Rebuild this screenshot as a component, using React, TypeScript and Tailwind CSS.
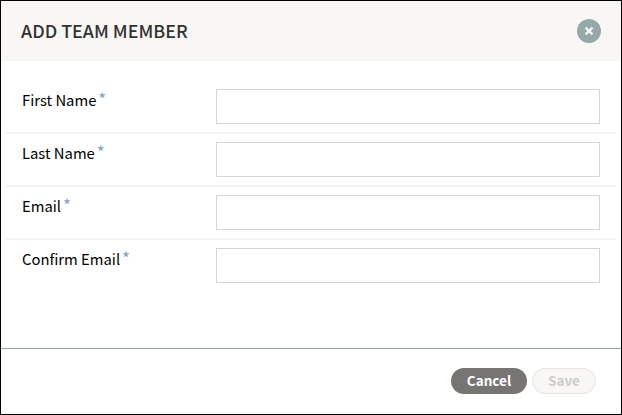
const fields = [
  { id: "firstName", label: "First Name", type: "text" },
  { id: "lastName", label: "Last Name", type: "text" },
  { id: "email", label: "Email", type: "email" },
  { id: "confirmEmail", label: "Confirm Email", type: "email" },
]

function CloseButton() {
  return (
    <button
      type="button"
      aria-label="Close"
      className="flex size-6 items-center justify-center rounded-full bg-[#95a9a8] text-[#f8f7f5]"
    >
      <svg width="10" height="10" viewBox="0 0 10 10" stroke="currentColor" strokeWidth="2.2">
        <path d="M1.6 1.6L8.4 8.4M8.4 1.6L1.6 8.4" />
      </svg>
    </button>
  )
}

export default function App() {
  return (
    <div className="flex h-[415px] w-[622px] flex-col border border-black bg-white font-['Noto_Sans_CJK_SC','Open_Sans',sans-serif]">
      <div className="flex h-[60px] items-center justify-between bg-[#f8f7f5] pr-5 pl-5">
        <h2 className="pb-0.5 text-[17.9px] leading-6 font-medium text-[#333333]">ADD TEAM MEMBER</h2>
        <CloseButton />
      </div>

      <form className="flex-1 px-[5px] pt-5">
        {fields.map((field) => (
          <div
            key={field.id}
            className="flex items-start justify-between border-b-2 border-[#f0f4f7] py-2 pr-4 pl-4 last:border-b-0"
          >
            <label htmlFor={field.id} className="flex text-[14.8px] leading-[22px] text-black">
              {field.label}
              <span className="ml-0.5 text-[17px] leading-5 text-[#7fa5c8]">*</span>
            </label>
            <input
              id={field.id}
              type={field.type}
              className="h-[35px] w-[384px] border border-[#cfd9d8] bg-white px-2 text-[15px] outline-none"
            />
          </div>
        ))}
      </form>

      <div className="flex h-[66px] items-start justify-end gap-[5px] border-t border-[#95a5a4] pt-[19px] pr-[25px]">
        <button
          type="button"
          className="h-[26px] w-[76px] rounded-full bg-[#777572] pb-0.5 text-[13.5px] leading-6 font-bold text-white"
        >
          Cancel
        </button>
        <button
          type="button"
          disabled
          className="h-[26px] w-16 rounded-full border border-[#e6e5e3] bg-[#f8f7f5] pb-0.5 text-[13.5px] leading-[22px] font-bold text-[#cccccc]"
        >
          Save
        </button>
      </div>
    </div>
  )
}
